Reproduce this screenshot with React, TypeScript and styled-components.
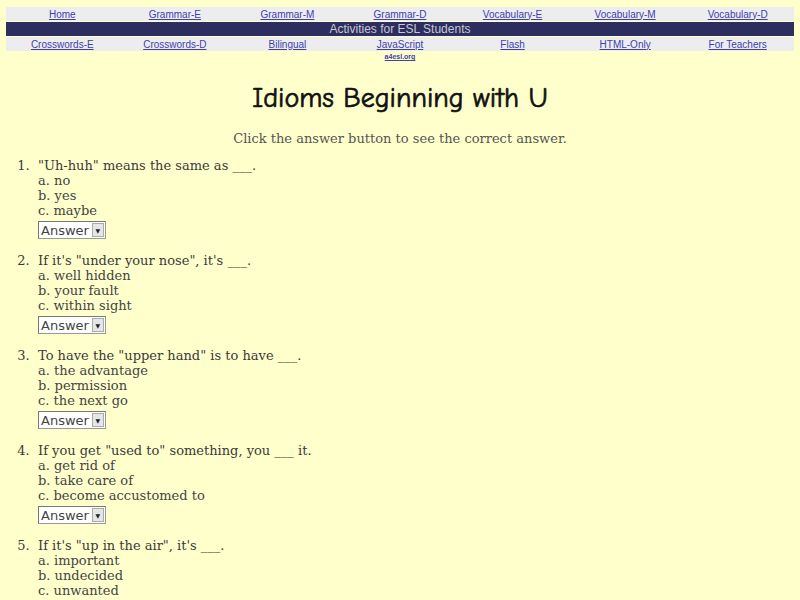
import styled, { createGlobalStyle } from 'styled-components';

const GlobalStyle = createGlobalStyle`
  html, body {
    margin: 0;
    padding: 0;
    background: #ffffcc;
  }
  body {
    font-family: "DejaVu Serif", serif;
    color: #333;
  }
`;

const Page = styled.div`
  padding: 7px 6px 0 6px;
`;

const NavTable = styled.div`
  display: flex;
  flex-direction: column;
  gap: 1px;
`;

const NavRow = styled.div<{ $dark?: boolean; $plain?: boolean }>`
  display: grid;
  grid-template-columns: repeat(7, 1fr);
  height: ${(p) => (p.$plain ? '10px' : '14px')};
  background: ${(p) => (p.$dark ? '#2d2d5f' : p.$plain ? 'transparent' : '#ededf0')};
`;

const NavCell = styled.a`
  display: flex;
  justify-content: center;
  align-items: center;
  font-family: "Liberation Sans", Arial, sans-serif;
  font-size: 10px;
  color: #4040a8;
  text-decoration: underline;
`;

const Banner = styled.div`
  grid-column: 1 / -1;
  display: flex;
  justify-content: center;
  align-items: center;
  font-family: "Liberation Sans", Arial, sans-serif;
  font-size: 12px;
  color: #c8c8d4;
`;

const SiteLink = styled.a`
  grid-column: 4;
  display: flex;
  justify-content: center;
  align-items: flex-start;
  font-family: "Liberation Sans", Arial, sans-serif;
  font-size: 7px;
  font-weight: bold;
  color: #4040a8;
  text-decoration: underline;
  padding-top: 1px;
`;

const Title = styled.h1`
  margin: 20px 0 0 0;
  text-align: center;
  font-family: "Comic Sans MS", "Comic Neue", "DejaVu Sans", sans-serif;
  font-size: 28px;
  line-height: 33px;
  font-weight: normal;
  color: #111;
  -webkit-text-stroke: 0.7px #111;
`;

const Intro = styled.p`
  margin: 16px 0 0 0;
  text-align: center;
  font-size: 13px;
  line-height: 15px;
  color: #555;
`;

const QuizList = styled.ol`
  margin: 12px 0 0 0;
  padding-left: 32px;
  font-size: 13px;
  line-height: 15px;
  color: #3a3a3a;

  li::marker {
    content: counter(list-item) ".\\00a0\\00a0";
  }
`;

const Question = styled.li`
  margin-bottom: 14px;
  padding-left: 0;
`;

const Options = styled.div`
  color: #444;
`;

const AnswerBox = styled.div`
  display: inline-flex;
  align-items: center;
  margin-top: 3px;
  height: 18px;
  padding: 0 1px 0 2px;
  background: #fff;
  border: 1px solid #999;
  border-top-color: #777;
  border-left-color: #777;
  font-family: "DejaVu Sans", sans-serif;
  font-size: 13px;
  color: #444;
  box-sizing: border-box;
`;

const Arrow = styled.span`
  display: flex;
  align-items: center;
  justify-content: center;
  width: 10px;
  height: 12px;
  margin-left: 3px;
  background: #e6e6e6;
  border: 1px solid #aaa;
  font-size: 6px;
  color: #222;
`;

const topLinks = ['Home', 'Grammar-E', 'Grammar-M', 'Grammar-D', 'Vocabulary-E', 'Vocabulary-M', 'Vocabulary-D'];
const bottomLinks = ['Crosswords-E', 'Crosswords-D', 'Bilingual', 'JavaScript', 'Flash', 'HTML-Only', 'For Teachers'];

const questions = [
  { q: '"Uh-huh" means the same as ___.', opts: ['no', 'yes', 'maybe'] },
  { q: 'If it\'s "under your nose", it\'s ___.', opts: ['well hidden', 'your fault', 'within sight'] },
  { q: 'To have the "upper hand" is to have ___.', opts: ['the advantage', 'permission', 'the next go'] },
  { q: 'If you get "used to" something, you ___ it.', opts: ['get rid of', 'take care of', 'become accustomed to'] },
  { q: 'If it\'s "up in the air", it\'s ___.', opts: ['important', 'undecided', 'unwanted'] },
];

export default function App() {
  return (
    <Page>
      <GlobalStyle />
      <NavTable>
        <NavRow>
          {topLinks.map((l) => (
            <NavCell key={l} href="#">{l}</NavCell>
          ))}
        </NavRow>
        <NavRow $dark>
          <Banner>Activities for ESL Students</Banner>
        </NavRow>
        <NavRow>
          {bottomLinks.map((l) => (
            <NavCell key={l} href="#">{l}</NavCell>
          ))}
        </NavRow>
        <NavRow $plain>
          <SiteLink href="#">a4esl.org</SiteLink>
        </NavRow>
      </NavTable>

      <Title>Idioms Beginning with U</Title>
      <Intro>Click the answer button to see the correct answer.</Intro>

      <QuizList>
        {questions.map((item) => (
          <Question key={item.q}>
            {item.q}
            <Options>
              {item.opts.map((o, i) => (
                <div key={o}>{'abc'[i]}. {o}</div>
              ))}
            </Options>
            <AnswerBox>
              Answer
              <Arrow>▼</Arrow>
            </AnswerBox>
          </Question>
        ))}
      </QuizList>
    </Page>
  );
}
